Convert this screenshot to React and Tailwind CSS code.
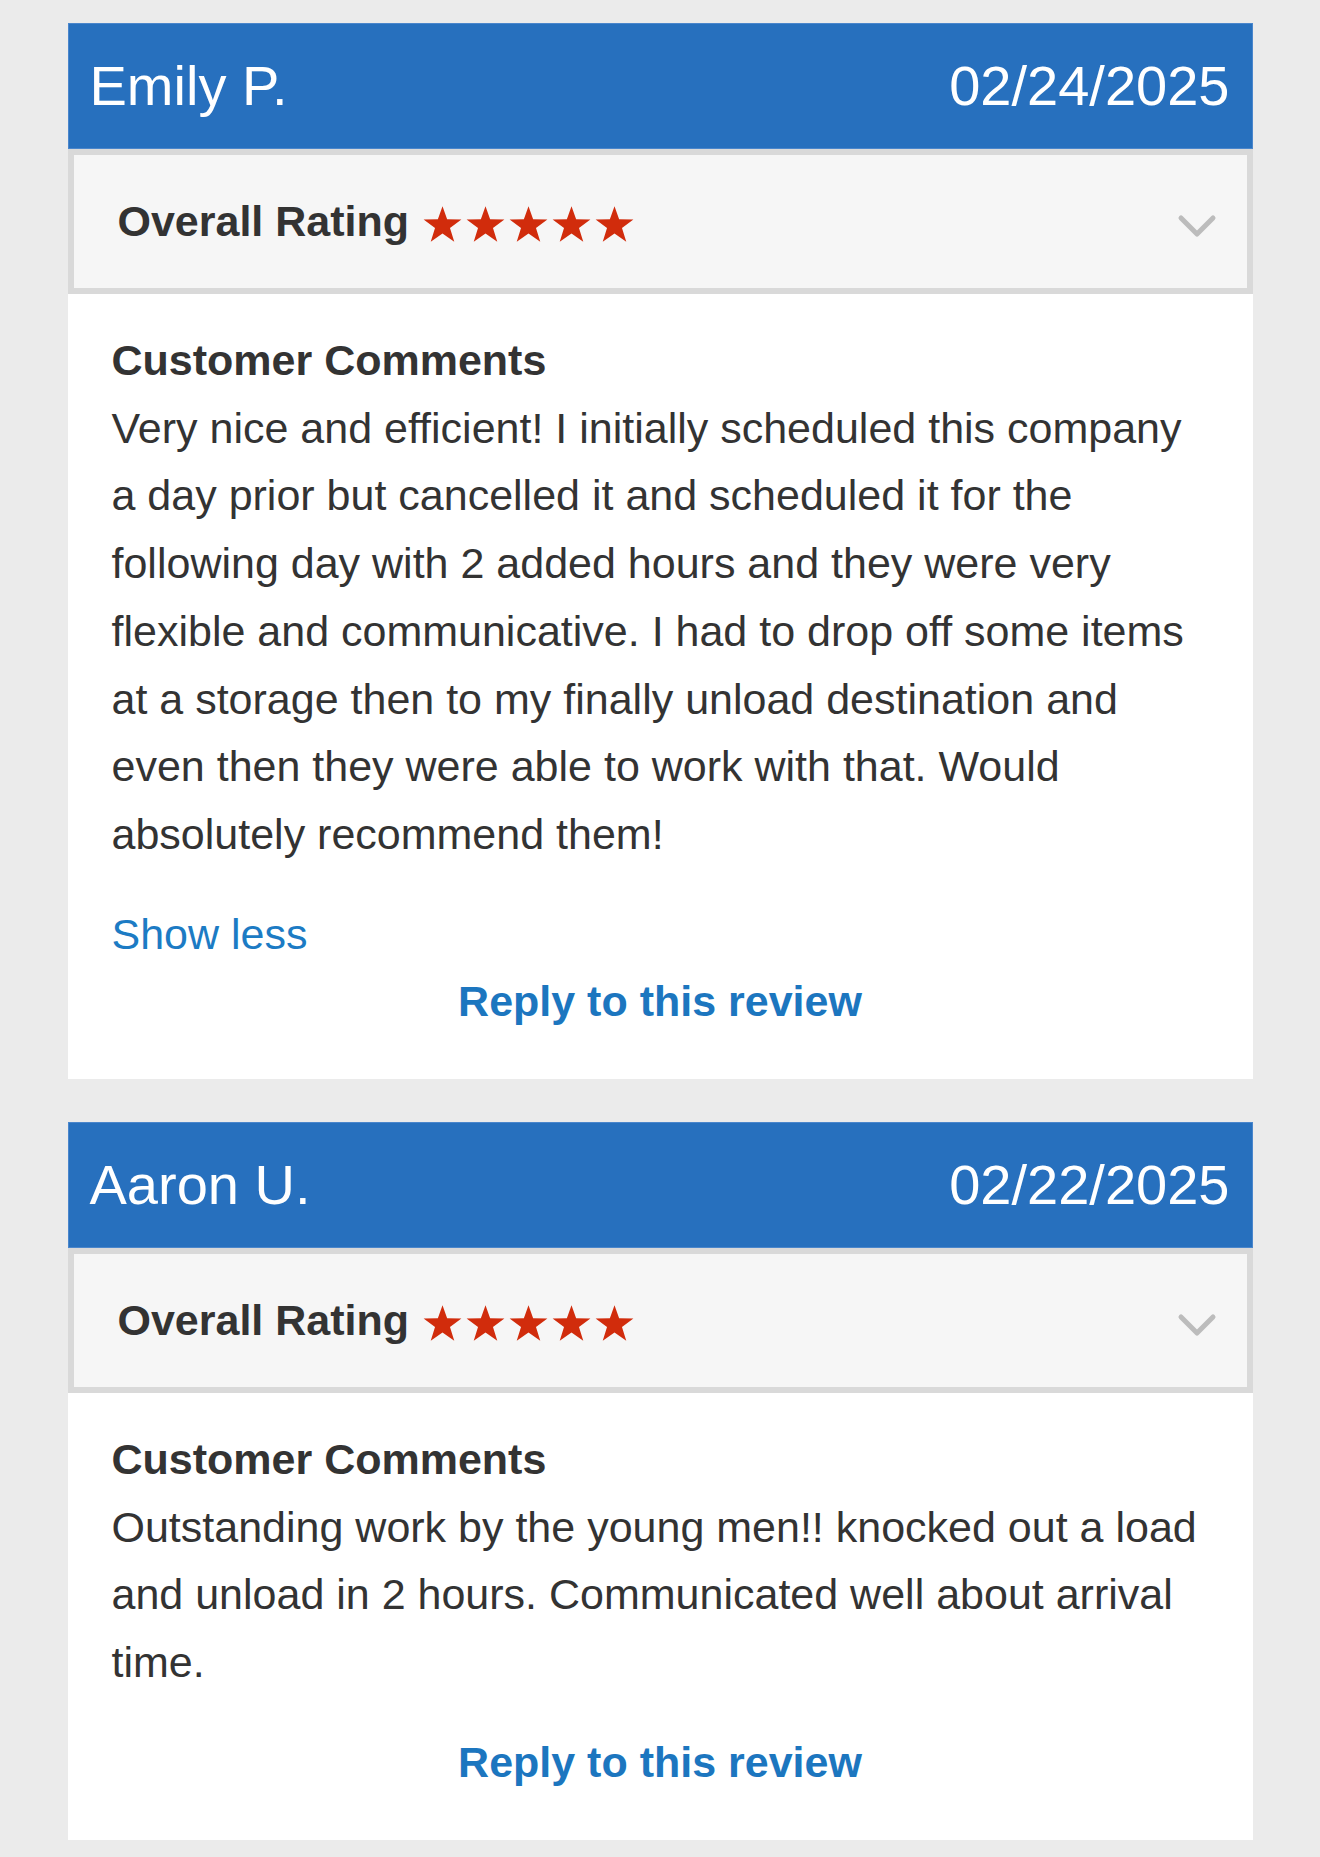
import React from "react";

function Star() {
  return (
    <svg width="43" height="41" viewBox="0 0 24 23" className="block">
      <path
        d="M12 1.2 L14.6 8.6 L22.6 8.7 L16.2 13.5 L18.6 21.2 L12 16.6 L5.4 21.2 L7.8 13.5 L1.4 8.7 L9.4 8.6 Z"
        fill="#d12c0c"
      />
    </svg>
  );
}

function Chevron() {
  return (
    <svg width="40" height="24" viewBox="0 0 40 24" className="block">
      <path
        d="M4 4 L20 20 L36 4"
        fill="none"
        stroke="#bcbcbc"
        strokeWidth="5"
        strokeLinecap="round"
        strokeLinejoin="round"
      />
    </svg>
  );
}

function Review({ name, date, lines, showLess }) {
  return (
    <div className="w-[1185px] mx-auto bg-white">
      <div className="h-[126px] bg-[#2770be] border border-[#4a86cc] flex items-center justify-between pl-[21px] pr-[22px] text-white text-[56px] leading-none">
        <span>{name}</span>
        <span>{date}</span>
      </div>
      <div className="h-[145px] border-[6px] border-[#d9d9d9] bg-[#f6f6f6] flex items-center justify-between pl-[44px] pr-[30px]">
        <div className="flex items-center">
          <span className="font-bold text-[43px] text-[#333333] leading-none">Overall Rating</span>
          <div className="flex ml-[12px] mt-[6px]">
            <Star />
            <Star />
            <Star />
            <Star />
            <Star />
          </div>
        </div>
        <div className="mt-[8px]">
          <Chevron />
        </div>
      </div>
      <div className="pt-[33px] pb-[43px] px-[44px] text-[#333333] text-[43px] leading-[67.7px]">
        <div className="font-bold">Customer Comments</div>
        <div>
          {lines.map((l, i) => (
            <div key={i} className="whitespace-nowrap">
              {l}
            </div>
          ))}
        </div>
        {showLess && <div className="mt-[32px] text-[#1c7bc4]">Show less</div>}
        <div
          className={
            "text-center font-bold text-[#1c76bf] " + (showLess ? "" : "mt-[32px]")
          }
        >
          Reply to this review
        </div>
      </div>
    </div>
  );
}

export default function App() {
  return (
    <div
      className="min-h-[1857px] bg-[#ebebeb] pt-[23px] pb-[20px] flex flex-col gap-[43px]"
      style={{ fontFamily: '"Liberation Sans", Arial, Helvetica, sans-serif' }}
    >
      <Review
        name="Emily P."
        date="02/24/2025"
        lines={[
          "Very nice and efficient! I initially scheduled this company",
          "a day prior but cancelled it and scheduled it for the",
          "following day with 2 added hours and they were very",
          "flexible and communicative. I had to drop off some items",
          "at a storage then to my finally unload destination and",
          "even then they were able to work with that. Would",
          "absolutely recommend them!",
        ]}
        showLess
      />
      <Review
        name="Aaron U."
        date="02/22/2025"
        lines={[
          "Outstanding work by the young men!! knocked out a load",
          "and unload in 2 hours. Communicated well about arrival",
          "time.",
        ]}
      />
    </div>
  );
}
